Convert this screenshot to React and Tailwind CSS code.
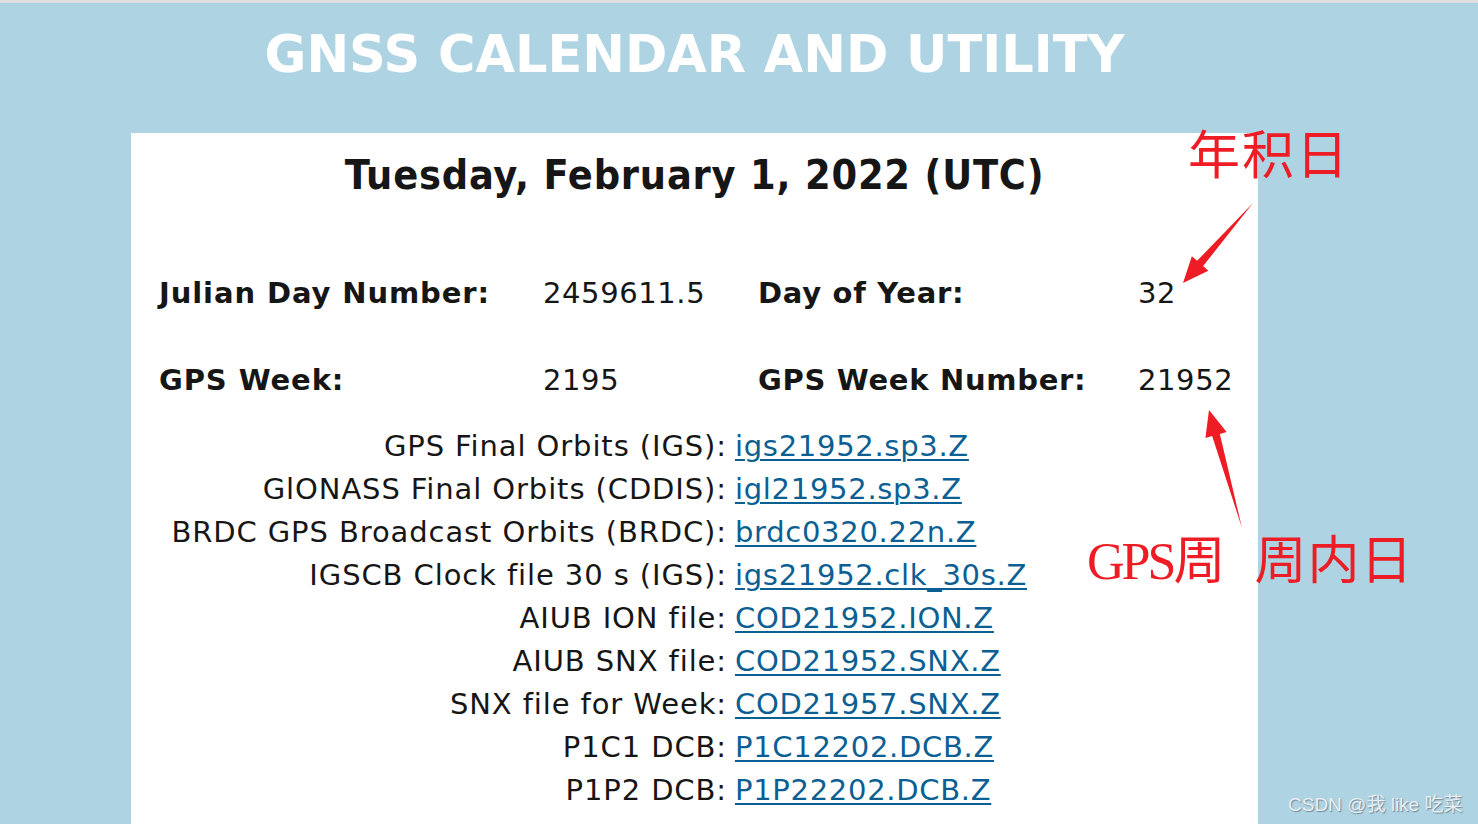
import React from 'react';

const stats = [
  ['Julian Day Number:', '2459611.5', 'Day of Year:', '32'],
  ['GPS Week:', '2195', 'GPS Week Number:', '21952'],
];

const files = [
  ['GPS Final Orbits (IGS):', 'igs21952.sp3.Z'],
  ['GlONASS Final Orbits (CDDIS):', 'igl21952.sp3.Z'],
  ['BRDC GPS Broadcast Orbits (BRDC):', 'brdc0320.22n.Z'],
  ['IGSCB Clock file 30 s (IGS):', 'igs21952.clk_30s.Z'],
  ['AIUB ION file:', 'COD21952.ION.Z'],
  ['AIUB SNX file:', 'COD21952.SNX.Z'],
  ['SNX file for Week:', 'COD21957.SNX.Z'],
  ['P1C1 DCB:', 'P1C12202.DCB.Z'],
  ['P1P2 DCB:', 'P1P22202.DCB.Z'],
];

function Arrow({ className, x1, y1, x2, y2 }) {
  // tapered shaft from (x1,y1) to the tip at (x2,y2)
  const dx = x2 - x1;
  const dy = y2 - y1;
  const len = Math.hypot(dx, dy);
  const ux = dx / len;
  const uy = dy / len;
  const px = -uy;
  const py = ux;
  const hx = x2 - ux * 26;
  const hy = y2 - uy * 26;
  const pts = [
    [x1, y1],
    [hx + px * 4, hy + py * 4],
    [hx + px * 11, hy + py * 11],
    [x2, y2],
    [hx - px * 11, hy - py * 11],
    [hx - px * 4, hy - py * 4],
  ]
    .map((p) => p.join(','))
    .join(' ');
  return (
    <svg className={className} width="1478" height="824" viewBox="0 0 1478 824">
      <polygon points={pts} fill="#ee1c25" />
    </svg>
  );
}

export default function App() {
  return (
    <div className="relative h-[824px] overflow-hidden bg-[#aed3e3] font-['DejaVu_Sans',sans-serif]">
      <div className="h-[3px] bg-[#dedede]" />

      <h1 className="ml-[131px] w-[1127px] pt-[20px] text-center text-[51px] leading-[64px] font-bold text-white">
        GNSS CALENDAR AND UTILITY
      </h1>

      <div className="ml-[131px] mt-[46px] w-[1127px] h-[700px] bg-white text-[#161616]">
        <h2 className="pt-[17px] text-center text-[41px] leading-[50px] font-bold tracking-[0.8px] font-['DejaVu_Sans_Condensed','DejaVu_Sans',sans-serif]">
          Tuesday, February 1, 2022 (UTC)
        </h2>

        <div className="mt-[73px] pl-[28px] flex flex-col gap-[47px]">
          {stats.map((r) => (
            <div key={r[0]} className="grid grid-cols-[384px_215px_380px_1fr] text-[29px] leading-[40px]">
              <span className="font-bold tracking-[0.9px]">{r[0]}</span>
              <span className="tracking-[0.6px]">{r[1]}</span>
              <span className="font-bold tracking-[0.7px]">{r[2]}</span>
              <span className="tracking-[0.6px]">{r[3]}</span>
            </div>
          ))}
        </div>

        <div className="mt-[25px] grid grid-cols-[596px_1fr] text-[29px] leading-[43px]">
          {files.map(([label, link]) => (
            <React.Fragment key={link}>
              <span className="text-right tracking-[0.9px]">{label}</span>
              <span className="pl-[8px] tracking-[0.7px]">
                <a href="#" className="text-[#0b5f93] underline decoration-2 underline-offset-[3px]">
                  {link}
                </a>
              </span>
            </React.Fragment>
          ))}
        </div>
      </div>

      {/* annotations pasted over the screenshot */}
      <div className="absolute left-[1188px] top-[122px] text-[52px] leading-[60px] text-[#ee1c25] font-['Noto_Sans_CJK_SC',serif] tracking-[2px]">
        年积日
      </div>
      <div className="absolute left-[1087px] top-[530px] text-[52px] leading-[64px] text-[#ee1c25] font-['Liberation_Serif','Noto_Sans_CJK_SC',serif] flex gap-[32px]">
        <span className="tracking-[-3px]">GPS周</span>
        <span className="tracking-[1px]">周内日</span>
      </div>
      <Arrow className="absolute left-0 top-0 pointer-events-none" x1={1253} y1={203} x2={1183} y2={283} />
      <Arrow className="absolute left-0 top-0 pointer-events-none" x1={1242} y1={528} x2={1209} y2={410} />

      <div className="absolute left-[1288px] top-[792px] text-[19px] leading-[26px] text-[#e8eef2] font-['Liberation_Sans','Noto_Sans_CJK_SC',sans-serif] [text-shadow:1px_1px_1px_rgba(80,90,100,0.6)]">
        CSDN @我 like 吃菜
      </div>
    </div>
  );
}
